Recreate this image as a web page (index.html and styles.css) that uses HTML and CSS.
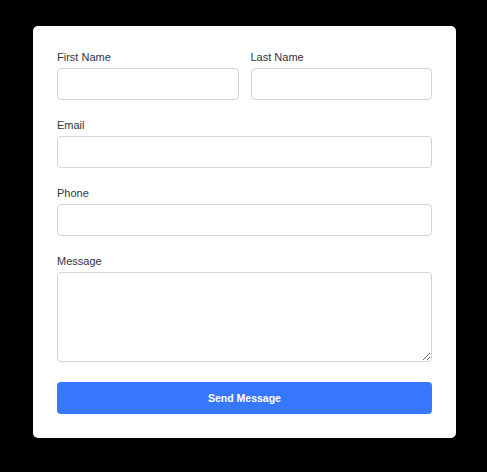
FILE: index.html
```html
<!DOCTYPE html>
<html lang="en">
<head>
    <meta charset="UTF-8">
    <title>Contact Form</title>
    <link rel="stylesheet" href="styles.css">
</head>
<body>
    <div class="card">
        <form class="contact-form">
            <div class="row">
                <div class="field">
                    <label for="firstName">First Name</label>
                    <input type="text" id="firstName">
                </div>
                <div class="field">
                    <label for="lastName">Last Name</label>
                    <input type="text" id="lastName">
                </div>
            </div>
            <div class="field">
                <label for="email">Email</label>
                <input type="email" id="email">
            </div>
            <div class="field">
                <label for="phone">Phone</label>
                <input type="tel" id="phone">
            </div>
            <div class="field">
                <label for="message">Message</label>
                <textarea id="message"></textarea>
            </div>
            <button type="button" class="send-btn">Send Message</button>
        </form>
    </div>
</body>
</html>
```

FILE: styles.css
```css
body {
    margin: 0;
    padding: 26px 31px 0 33px;
    background-color: #000;
    font-family: "Liberation Sans", Arial, sans-serif;
}
.card {
    background-color: #fff;
    border-radius: 5px;
    padding: 24px;
}
.contact-form {
    display: flex;
    flex-direction: column;
    gap: 18px;
}
.row {
    display: grid;
    grid-template-columns: 1fr 1fr;
    gap: 12px;
}
.field {
    display: flex;
    flex-direction: column;
    gap: 4px;
}
label {
    font-size: 11px;
    line-height: 14px;
    color: #2f3542;
}
input, textarea {
    box-sizing: border-box;
    width: 100%;
    height: 32px;
    border: 1px solid #d1d5db;
    border-radius: 4px;
    background: #fff;
    font-family: inherit;
    font-size: 12px;
    padding: 6px 8px;
}
textarea {
    height: 90px;
    resize: vertical;
}
.send-btn {
    margin-top: 2px;
    height: 32px;
    border: none;
    border-radius: 4px;
    background-color: #3777fd;
    color: #fff;
    font-family: inherit;
    font-size: 10.5px;
    font-weight: bold;
}
```
